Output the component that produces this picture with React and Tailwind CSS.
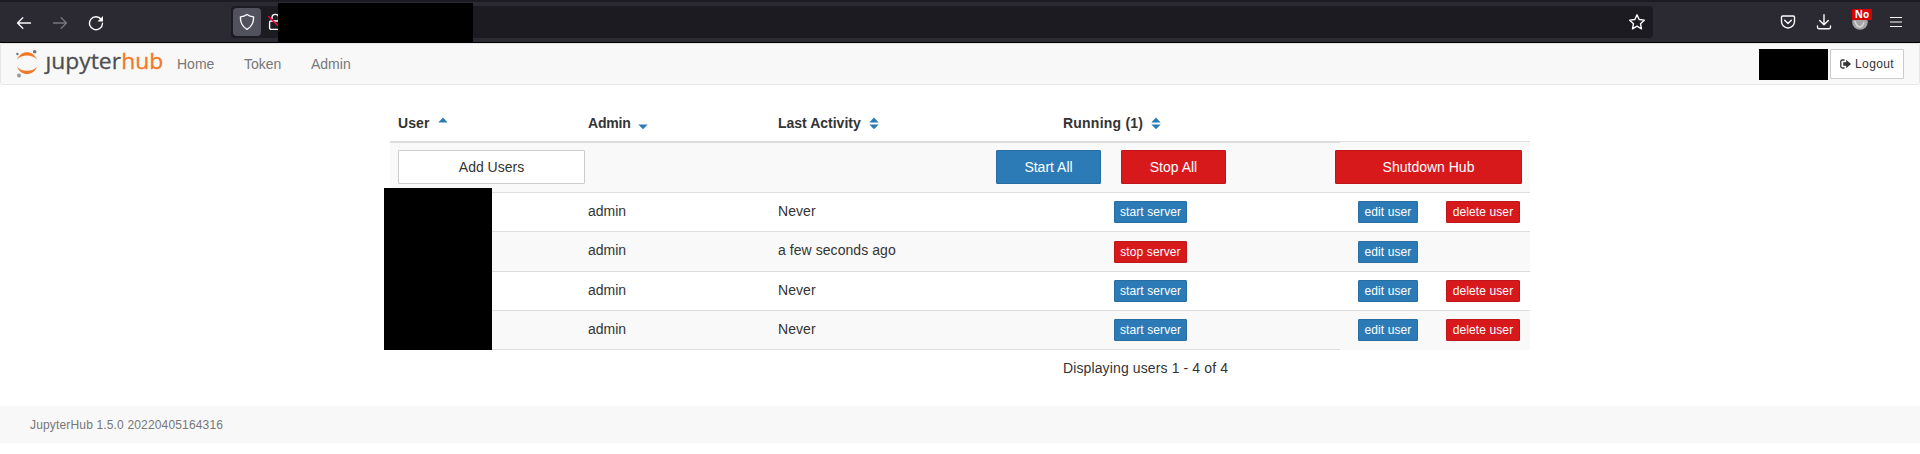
import React from "react";

const base = "flex items-center justify-center rounded-[1px] border text-white shrink-0";
const blue = "bg-[#2c7bb6] border-[#276da2]";
const red = "bg-[#d7191c] border-[#c11619]";

function Sort({ up, down, className }) {
  return (
    <svg width="10" height="14" viewBox="0 0 10 14" fill="#2c7bb6" className={className}>
      {up && <path d="M.3 5.400 5 .5l4.700 4.900z" />}
      {down && <path d="M.3 7.400h9.400L5 12.200z" />}
    </svg>
  );
}

function Chrome() {
  return (
    <div className="h-[43px] border-t-2 border-b border-t-[#1c1b22] border-b-black bg-[#2b2a33] flex items-start relative">
      <svg width="16" height="16" viewBox="0 0 16 16" fill="none" stroke="#fbfbfe" strokeWidth="1.300" strokeLinecap="round" strokeLinejoin="round" className="mt-[13px] ml-4">
        <path d="M14.500 8H1.500M6.800 2.700 1.500 8l5.300 5.300" />
      </svg>
      <svg width="16" height="16" viewBox="0 0 16 16" fill="none" stroke="#77767d" strokeWidth="1.300" strokeLinecap="round" strokeLinejoin="round" className="mt-[13px] ml-5">
        <path d="M1.500 8h13M9.200 2.700 14.500 8l-5.300 5.300" />
      </svg>
      <svg width="16" height="16" viewBox="0 0 16 16" fill="none" stroke="#fbfbfe" strokeWidth="1.400" strokeLinecap="round" className="mt-[13px] ml-5">
        <path d="M13.300 4.500A6.500 6.500 0 1 0 14.500 8.300" />
        <path d="M15 1v5.500H9.500z" fill="#fbfbfe" stroke="none" />
      </svg>
      <div className="ml-[127px] mt-1 h-8 w-[1422px] rounded bg-[#1c1b22] flex items-center">
        <div className="ml-[2px] w-7 h-7 rounded bg-[#52525e] flex items-center justify-center">
          <svg width="16" height="18" viewBox="0 0 16 18" fill="none" stroke="#fbfbfe" strokeWidth="1.400" strokeLinejoin="round">
            <path d="M8 1.500c2 1.400 4 2.100 6.600 2.400.2 5-1.600 9.600-6.600 12.500-5-2.900-6.800-7.500-6.600-12.500C4 3.600 6 2.900 8 1.500z" />
          </svg>
        </div>
        <svg width="16" height="18" viewBox="0 0 16 18" fill="none" stroke="#fbfbfe" strokeWidth="1.400" className="ml-[7px]">
          <rect x="1.600" y="8" width="12" height="8.400" rx="1.500" />
          <path d="M4 6V4.700a3.300 3.300 0 0 1 6.600 0V8" />
          <path d="M.3 3.200 15 17.500" stroke="#ff0039" />
        </svg>
        <svg width="18" height="18" viewBox="0 0 18 18" fill="none" stroke="#fbfbfe" strokeWidth="1.400" strokeLinejoin="round" className="ml-auto mr-[7px]">
          <path d="m9 1.800 2.150 4.750 5.150.6-3.800 3.500 1 5.150L9 13.200l-4.500 2.600 1-5.150-3.800-3.500 5.150-.6z" />
        </svg>
      </div>
      <svg width="16" height="16" viewBox="0 0 16 16" fill="none" stroke="#fbfbfe" strokeWidth="1.400" strokeLinecap="round" strokeLinejoin="round" className="ml-[127px] mt-3">
        <path d="M2.700 2h10.600c.7 0 1.200.5 1.200 1.200v4.300a6.500 6.500 0 0 1-13 0V3.200C1.500 2.500 2 2 2.700 2zM4.700 6.300 8 9.500l3.300-3.200" />
      </svg>
      <svg width="16" height="16" viewBox="0 0 16 16" fill="none" stroke="#fbfbfe" strokeWidth="1.400" strokeLinecap="round" strokeLinejoin="round" className="ml-5 mt-[12px]">
        <path d="M8 .8v9.700M3.700 6.500 8 10.700l4.300-4.200M1.500 12v1.300c0 .8.500 1.400 1.400 1.400h10.200c.9 0 1.400-.6 1.400-1.400V12" />
      </svg>
      <div className="relative ml-5 mt-3 w-4 h-4">
        <svg width="16" height="16" viewBox="0 0 16 16">
          <circle cx="8" cy="8" r="7.800" fill="#a5a5a5" />
          <path d="M3 7c1 4 3 6 5 6s3-2 4-5" fill="none" stroke="#d6d6d6" strokeWidth="1.500" />
        </svg>
        <span className="absolute left-0 -top-[5px] w-5 h-[11px] rounded-[1px] bg-[#d70000] text-white text-[10px] leading-[11px] font-bold text-center font-['Open_Sans',sans-serif]">No</span>
      </div>
      <svg width="16" height="16" viewBox="0 0 16 16" fill="none" stroke="#fbfbfe" strokeWidth="1.200" className="ml-5 mt-3">
        <path d="M2 3.500h12M2 8h12M2 12.500h12" />
      </svg>
      <div className="absolute left-[278px] top-[1px] w-[195px] h-[40px] bg-black" />
    </div>
  );
}

function Logo() {
  return (
    <svg width="150" height="38" viewBox="0 -4 150 38" className="ml-[14px] overflow-visible">
      <path d="M2 10.500C4 5.700 8 3.200 12 3.200S20 5.700 22 10.500C19 7.500 16 6.500 12 6.500S5 7.500 2 10.500z" fill="#f37726" />
      <path d="M2 17.700C4 22.500 8 25 12 25S20 22.500 22 17.700C19 20.700 16 21.700 12 21.700S5 20.700 2 17.700z" fill="#f37726" />
      <circle cx="19.700" cy="2.800" r="1.800" fill="#767677" />
      <circle cx="2.400" cy="5" r="1.200" fill="#767677" />
      <circle cx="4" cy="26.600" r="2" fill="#989798" />
      <text x="30.500" y="20" fontSize="22.500" textLength="75.500" lengthAdjust="spacingAndGlyphs" fill="#4e4e4e" stroke="#4e4e4e" strokeWidth=".3" fontFamily="'Open Sans', sans-serif">ȷupyter</text>
      <text x="106.300" y="20" fontSize="22.500" textLength="42" lengthAdjust="spacingAndGlyphs" fill="#f37726" stroke="#f37726" strokeWidth=".3" fontFamily="'Open Sans', sans-serif">hub</text>
    </svg>
  );
}

function Nav() {
  return (
    <nav className="h-[42px] bg-[#f8f8f8] border border-[#e7e7e7] rounded-[2px] flex items-center text-[#777]">
      <Logo />
      <span className="ml-[12px] w-[67px]">Home</span>
      <span className="w-[67px]">Token</span>
      <span>Admin</span>
      <div className="ml-auto w-[69px] h-[31px] bg-black" />
      <div className="ml-[2px] mr-[15px] w-[74px] h-[30px] bg-white border border-[#ccc] rounded-[1px] text-[#333] text-xs tracking-[0.4px] flex items-center pl-[9px]">
        <svg width="11" height="10" viewBox="0 0 11 10" className="mr-[4px]">
          <path d="M4.500 1H2.500C1.500 1 .8 1.700.8 2.500v5c0 .8.700 1.500 1.700 1.500h2" fill="none" stroke="#333" strokeWidth="1.300" />
          <path d="M3.200 3.300h3V.8L11 5 6.200 9.200V6.700h-3z" fill="#333" />
        </svg>
        Logout
      </div>
    </nav>
  );
}

const users = [
  { activity: "Never", h: "h-[39px]", bg: "bg-white" },
  { activity: "a few seconds ago", running: true, h: "h-[40px]", bg: "bg-[#f9f9f9]", top: "mt-[9px]" },
  { activity: "Never", h: "h-[39px]", bg: "bg-white" },
  { activity: "Never", h: "h-[39px]", bg: "bg-[#f9f9f9]" },
];

function UserRow({ user }) {
  const small = `${base} h-[22px] text-xs tracking-[0.1px] ${user.top || "mt-[8px]"}`;
  return (
    <div className={`flex items-start border-t border-[#ddd] ${user.h} ${user.bg}`}>
      <span className="ml-[198px] w-[190px] mt-2">admin</span>
      <span className="w-[336px] mt-2 tracking-[0.06px]">{user.activity}</span>
      <div className={`${small} w-[73px] ${user.running ? red : blue}`}>{user.running ? "stop server" : "start server"}</div>
      <div className={`${small} ml-[171px] w-[60px] ${blue}`}>edit user</div>
      {!user.running && <div className={`${small} ml-[28px] w-[74px] ${red}`}>delete user</div>}
    </div>
  );
}

export default function App() {
  const big = `${base} h-[34px]`;
  return (
    <div className="w-[1920px] h-[454px] overflow-hidden bg-white font-['Liberation_Sans',Arial,sans-serif] text-sm leading-5 text-[#333]">
      <Chrome />
      <Nav />
      <main className="relative ml-[390px] w-[1140px] mt-[28px] h-[293px]">
        <div className="h-[28px] flex font-bold pl-2">
          <span className="w-[190px] flex tracking-[0.1px]">User<Sort up className="ml-2 mt-[4px]" /></span>
          <span className="w-[190px] flex tracking-[-0.2px]">Admin<Sort down className="ml-[7px] mt-[4px]" /></span>
          <span className="w-[285px] flex">Last Activity<Sort up down className="ml-2 mt-[4px]" /></span>
          <span className="flex tracking-[0.22px]">Running (1)<Sort up down className="ml-2 mt-[4px]" /></span>
        </div>
        <div className="h-[51px] bg-[#f9f9f9]">
          <div className="h-[2px] flex items-start">
            <div className="w-[950px] h-[2px] bg-[#ddd]" />
            <div className="w-[190px] h-px bg-[#ddd]" />
          </div>
          <div className="flex pt-[7px] pl-2">
            <div className="w-[187px] h-[34px] bg-white border border-[#ccc] rounded-[1px] flex items-center justify-center">Add Users</div>
            <div className={`${big} ${blue} ml-[411px] w-[105px]`}>Start All</div>
            <div className={`${big} ${red} ml-[20px] w-[105px]`}>Stop All</div>
            <div className={`${big} ${red} ml-[109px] w-[187px]`}>Shutdown Hub</div>
          </div>
        </div>
        {users.map((u, i) => <UserRow key={i} user={u} />)}
        <div className="h-px flex bg-[#f9f9f9]"><div className="w-[950px] bg-[#ddd]" /></div>
        <p className="mt-[8px] ml-[673px] tracking-[0.12px]">Displaying users 1 - 4 of 4</p>
        <div className="absolute left-[-6px] top-[75px] w-[108px] h-[162px] bg-black" />
      </main>
      <footer className="h-[37px] bg-[#f8f8f8] text-[#777] text-xs tracking-[0.16px] flex items-center pl-[30px]">JupyterHub 1.5.0 20220405164316</footer>
    </div>
  );
}
